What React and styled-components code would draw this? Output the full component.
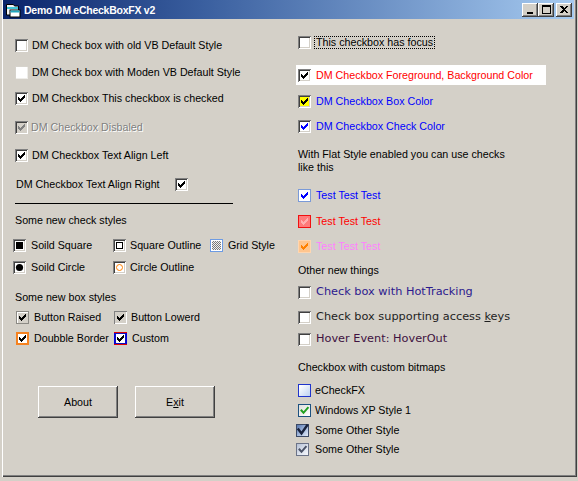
import React from 'react';
import styled, { createGlobalStyle, css } from 'styled-components';

const GlobalStyle = createGlobalStyle`
  html, body {
    margin: 0;
    padding: 0;
    background: #d4d0c8;
  }
  body {
    width: 578px;
    height: 481px;
    overflow: hidden;
    font-family: "Liberation Sans", Arial, sans-serif;
    font-size: 10.7px;
  }
`;

const Window = styled.div`
  width: 577px;
  height: 477px;
  box-sizing: border-box;
  border-left: 2px solid #d4d0c8;
  padding: 0 3px 0 1px;
  background: #d4d0c8;
  box-shadow: inset 1px 0 #fff, inset -1px -1px #404040, inset -2px -2px #808080;
`;

const TitleBar = styled.div`
  height: 19px;
  display: flex;
  align-items: center;
  padding: 0 2px 0 2px;
  background: linear-gradient(90deg, #0a246a 0%, #3a5f9f 35%, #a6caf0 100%);
`;

const TitleText = styled.span`
  margin-left: 3px;
  color: #fff;
  font-family: "Liberation Sans", Arial, sans-serif;
  font-weight: bold;
  font-size: 10.5px;
  letter-spacing: -0.25px;
`;

const CaptionButtons = styled.div`
  margin-left: auto;
  display: flex;
  align-items: center;
`;

const CaptionButton = styled.div`
  width: 16px;
  height: 14px;
  box-sizing: border-box;
  margin-left: ${p => p.$gap || 0}px;
  background: #d4d0c8;
  box-shadow: inset -1px -1px #404040, inset 1px 1px #fff, inset -2px -2px #808080;
  display: flex;
  align-items: center;
  justify-content: center;
  svg { display: block; }
`;

const Client = styled.div`
  display: grid;
  grid-template-columns: 293px 1fr;
`;

const Column = styled.div`
  display: flex;
  flex-direction: column;
  padding-left: ${p => p.$pl}px;
`;

const Row = styled.div`
  display: flex;
  align-items: center;
  height: ${p => p.$h || 16}px;
  margin-top: ${p => p.$mt || 0}px;
  margin-left: ${p => p.$ml || 0}px;
  gap: ${p => (p.$gap === undefined ? 4 : p.$gap)}px;
`;

const Band = styled(Row)`
  width: 248px;
  padding-left: 2px;
  margin-left: -2px;
  background: #fff;
`;

const Label = styled.span`
  color: ${p => p.$color || '#000'};
  font-family: ${p => (p.$wide ? '"DejaVu Sans", Verdana, sans-serif' : '"Liberation Sans", Arial, sans-serif')};
  font-size: ${p => (p.$wide ? '11.3px' : '10.7px')};
  line-height: 16px;
  white-space: nowrap;
  width: ${p => (p.$w ? `${p.$w}px` : 'auto')};
  ${p => p.$disabled && css`
    color: #808080;
    text-shadow: 1px 1px #fff;
  `}
  ${p => p.$focus && css`
    line-height: 11px;
    padding: 0 1px;
    margin-left: -2px;
    border: 1px dotted #000;
  `}
`;

const Text = styled.div`
  margin-top: ${p => p.$mt || 0}px;
  font-size: 10.7px;
  line-height: ${p => p.$lh || 16}px;
  color: #000;
`;

const Rule = styled.div`
  width: 218px;
  height: 1px;
  margin-top: ${p => p.$mt}px;
  border-bottom: 1px solid #000;
`;

const StyleGrid = styled.div`
  display: grid;
  grid-template-columns: ${p => p.$cols};
  margin-left: ${p => p.$ml || 0}px;
  margin-top: ${p => p.$mt || 0}px;
  row-gap: ${p => p.$rg || 0}px;
`;

const looks = {
  sunken: css`
    box-shadow: inset 1px 1px #808080, inset -1px -1px #fff, inset 2px 2px #404040, inset -2px -2px #d4d0c8;
  `,
  modern: css`
    box-shadow: inset 1px 1px #d6d3cc, inset -1px -1px #eeede9;
  `,
  raised: css`
    box-shadow: inset 0 0 0 1px #8c8a84, inset 1px 1px 0 1px #fff;
  `,
  lowered: css`
    box-shadow: inset 1px 1px #808080, inset -1px -1px #fff;
  `,
  double: css`
    box-shadow: inset 0 0 0 2px #f58220;
  `,
  custom: css`
    box-shadow: inset 0 1px #e00000, inset 0 -1px #e00000, inset 1px 0 #0000e0, inset -1px 0 #0000e0, inset 0 0 0 2px #1010c0;
  `,
  flat: css`
    box-shadow: inset 0 0 0 1px ${p => p.$edge};
  `,
  grid: css`
    box-shadow: inset 0 0 0 1px #6d9be3, inset 0 0 0 2px #fff;
    background: repeating-conic-gradient(#7a7a7a 0 25%, #f0f0f0 0 50%) 0 0 / 2px 2px;
  `,
  fx: css`
    box-shadow: inset 0 0 0 1px #1f34cc;
    background: linear-gradient(135deg, #ffffff 15%, #b7cdf1 100%);
  `,
  xp: css`
    box-shadow: inset 0 0 0 1px #1c5180;
    background: linear-gradient(135deg, #dcdcd7 0%, #ffffff 90%);
  `,
  navy: css`
    box-shadow: inset 0 0 0 1px #3c4a66;
    background: linear-gradient(135deg, #4a6ba6 0%, #9fb6dc 50%, #eef3fa 100%);
  `,
  steel: css`
    box-shadow: inset 0 0 0 1px #6b7388;
    background: linear-gradient(135deg, #aeb9cf 0%, #dde3ee 55%, #fafbfd 100%);
  `,
};

const Box = styled.span`
  flex: none;
  display: block;
  width: 13px;
  height: 13px;
  box-sizing: border-box;
  background: ${p => p.$fill || '#fff'};
  ${p => looks[p.$look || 'sunken']}
  svg { display: block; }
`;

const PushButton = styled.div`
  width: 80px;
  height: 32px;
  box-sizing: border-box;
  display: flex;
  align-items: center;
  justify-content: center;
  background: #d4d0c8;
  box-shadow: inset -1px -1px #404040, inset 1px 1px #fff, inset -2px -2px #808080;
  font-size: 10.7px;
  color: #000;
`;

const ButtonRow = styled.div`
  display: flex;
  gap: 17px;
  margin-top: 40px;
  margin-left: 23px;
`;

function PixelCheck({ color = '#000' }) {
  return (
    <svg width="13" height="13" viewBox="0 0 13 13" shapeRendering="crispEdges">
      <path d="M3 5h1v1h1v1h1v-1h1v-1h1v-1h1v-1h1v3h-1v1h-1v1h-1v1h-1v1h-1v-1h-1v-1h-1z" fill={color} />
    </svg>
  );
}

function SmoothCheck({ color, width = 1.8, big }) {
  return (
    <svg width="13" height="13" viewBox="0 0 13 13">
      <polyline
        points={big ? '2.5,5.5 5.5,9.5 11,1.5' : '3.5,6.5 5.5,8.8 9.8,3.8'}
        fill="none"
        stroke={color}
        strokeWidth={width}
        strokeLinecap="square"
      />
    </svg>
  );
}

function Mark({ kind }) {
  return (
    <svg width="13" height="13" viewBox="0 0 13 13" shapeRendering={kind === 'dot' || kind === 'ring' ? 'auto' : 'crispEdges'}>
      {kind === 'square' && <rect x="3" y="3" width="7" height="7" fill="#000" />}
      {kind === 'outline' && <rect x="3.5" y="3.5" width="6" height="6" fill="#fff" stroke="#000" />}
      {kind === 'dot' && <circle cx="6.5" cy="6.5" r="3.6" fill="#000" />}
      {kind === 'ring' && <circle cx="6.5" cy="6.5" r="3" fill="none" stroke="#ff8000" strokeWidth="1" />}
    </svg>
  );
}

function AppIcon() {
  return (
    <svg width="16" height="16" viewBox="0 0 16 16">
      <path d="M1.5 2.5h7l1 1.5h4v9h-12z" fill="#f4f4f4" stroke="#000" />
      <rect x="2" y="5" width="11" height="2" fill="#40c8d8" />
      <rect x="5" y="8" width="10" height="7" fill="#fff" stroke="#000" />
      <rect x="5.5" y="8.5" width="9" height="2" fill="#20a8c0" />
    </svg>
  );
}

export default function App() {
  return (
    <>
      <GlobalStyle />
      <Window>
        <TitleBar>
          <AppIcon />
          <TitleText>Demo DM eCheckBoxFX v2</TitleText>
          <CaptionButtons>
            <CaptionButton>
              <svg width="8" height="8" viewBox="0 0 8 8" shapeRendering="crispEdges">
                <rect x="1" y="6" width="6" height="2" fill="#000" />
              </svg>
            </CaptionButton>
            <CaptionButton>
              <svg width="9" height="9" viewBox="0 0 9 9" shapeRendering="crispEdges">
                <path d="M0 0h9v9h-9z M1 2v6h7v-6z" fill="#000" fillRule="evenodd" />
              </svg>
            </CaptionButton>
            <CaptionButton $gap={2}>
              <svg width="8" height="7" viewBox="0 0 8 7" shapeRendering="crispEdges">
                <path d="M0 0h2l2 2l2-2h2v0l-3 3.5l3 3.5h-2l-2-2l-2 2h-2l3-3.5z" fill="#000" />
              </svg>
            </CaptionButton>
          </CaptionButtons>
        </TitleBar>

        <Client>
          <Column $pl={12}>
            <Row $mt={18}>
              <Box $look="sunken" />
              <Label>DM Check box with old VB Default Style</Label>
            </Row>
            <Row $mt={11}>
              <Box $look="modern" />
              <Label>DM Check box with Moden VB Default Style</Label>
            </Row>
            <Row $mt={10}>
              <Box $look="sunken"><PixelCheck /></Box>
              <Label>DM Checkbox This checkbox is checked</Label>
            </Row>
            <Row $mt={13} $gap={3}>
              <Box $look="sunken" $fill="#d4d0c8"><PixelCheck color="#808080" /></Box>
              <Label $disabled>DM Checkbox Disbaled</Label>
            </Row>
            <Row $mt={12}>
              <Box $look="sunken"><PixelCheck /></Box>
              <Label>DM Checkbox Text Align Left</Label>
            </Row>
            <Row $mt={13} $ml={1} $gap={0}>
              <Label $w={159}>DM Checkbox Text Align Right</Label>
              <Box $look="sunken"><PixelCheck /></Box>
            </Row>
            <Rule $mt={10} />
            <Text $mt={8}>Some new check styles</Text>
            <StyleGrid $cols="100px 97px auto" $ml={-2} $mt={9} $rg={6}>
              <Row $gap={5}>
                <Box $look="sunken"><Mark kind="square" /></Box>
                <Label>Soild Square</Label>
              </Row>
              <Row>
                <Box $look="sunken"><Mark kind="outline" /></Box>
                <Label>Square Outline</Label>
              </Row>
              <Row $gap={5}>
                <Box $look="grid" />
                <Label>Grid Style</Label>
              </Row>
              <Row $gap={5}>
                <Box $look="sunken"><Mark kind="dot" /></Box>
                <Label>Soild Circle</Label>
              </Row>
              <Row>
                <Box $look="sunken"><Mark kind="ring" /></Box>
                <Label>Circle Outline</Label>
              </Row>
            </StyleGrid>
            <Text $mt={14}>Some new box styles</Text>
            <StyleGrid $cols="98px auto" $ml={1} $mt={4} $rg={5}>
              <Row $gap={5}>
                <Box $look="raised" $fill="#d4d0c8"><PixelCheck /></Box>
                <Label>Button Raised</Label>
              </Row>
              <Row>
                <Box $look="lowered" $fill="#d4d0c8"><PixelCheck /></Box>
                <Label>Button Lowerd</Label>
              </Row>
              <Row $gap={5}>
                <Box $look="double"><PixelCheck /></Box>
                <Label>Doubble Border</Label>
              </Row>
              <Row $gap={5}>
                <Box $look="custom"><PixelCheck /></Box>
                <Label>Custom</Label>
              </Row>
            </StyleGrid>
            <ButtonRow>
              <PushButton>About</PushButton>
              <PushButton>E<u>x</u>it</PushButton>
            </ButtonRow>
          </Column>

          <Column $pl={2}>
            <Row $mt={15} $gap={5}>
              <Box $look="sunken" />
              <Label $focus>This checkbox has focus</Label>
            </Row>
            <Band $mt={15} $h={20} $gap={5}>
              <Box $look="sunken"><PixelCheck /></Box>
              <Label $color="#ff0000">DM Checkbox Foreground, Background Color</Label>
            </Band>
            <Row $mt={8} $gap={5}>
              <Box $look="sunken" $fill="#ffff00"><PixelCheck /></Box>
              <Label $color="#0000ff">DM Checkbox Box Color</Label>
            </Row>
            <Row $mt={9} $gap={5}>
              <Box $look="sunken"><PixelCheck color="#0000ff" /></Box>
              <Label $color="#0000ff">DM Checkbox Check Color</Label>
            </Row>
            <Text $mt={14} $lh={13}>
              With Flat Style enabled you can use checks
              <br />
              like this
            </Text>
            <Row $mt={13} $gap={5}>
              <Box $look="flat" $edge="#7a9ad8"><PixelCheck color="#0000ff" /></Box>
              <Label $color="#0000ff">Test Test Test</Label>
            </Row>
            <Row $mt={10} $gap={5}>
              <Box $look="flat" $edge="#f01010" $fill="#ff7b7b"><PixelCheck color="#ffb0b0" /></Box>
              <Label $color="#ff0000">Test Test Test</Label>
            </Row>
            <Row $mt={9} $gap={5}>
              <Box $look="flat" $edge="#ffd6b0" $fill="#ffc58e"><PixelCheck color="#ff8000" /></Box>
              <Label $color="#ff80ff">Test Test Test</Label>
            </Row>
            <Text $mt={8}>Other new things</Text>
            <Row $mt={6} $gap={5}>
              <Box $look="sunken" />
              <Label $wide $color="#2c1a8e">Check box with HotTracking</Label>
            </Row>
            <Row $mt={9} $gap={5}>
              <Box $look="sunken" />
              <Label $wide $color="#1e1e1e">Check box supporting access <u>k</u>eys</Label>
            </Row>
            <Row $mt={6} $gap={5}>
              <Box $look="sunken" />
              <Label $wide $color="#401240">Hover Event: HoverOut</Label>
            </Row>
            <Text $mt={12}>Checkbox with custom bitmaps</Text>
            <Row $mt={7}>
              <Box $look="fx" />
              <Label>eCheckFX</Label>
            </Row>
            <Row $mt={4}>
              <Box $look="xp"><SmoothCheck color="#21a121" width={2} /></Box>
              <Label>Windows XP Style 1</Label>
            </Row>
            <Row $mt={4} $ml={-2} $gap={6}>
              <Box $look="navy"><SmoothCheck color="#18223c" width={2.4} big /></Box>
              <Label>Some Other Style</Label>
            </Row>
            <Row $mt={3} $ml={-2} $gap={6}>
              <Box $look="steel"><SmoothCheck color="#4a5266" width={2} /></Box>
              <Label>Some Other Style</Label>
            </Row>
          </Column>
        </Client>
      </Window>
    </>
  );
}
